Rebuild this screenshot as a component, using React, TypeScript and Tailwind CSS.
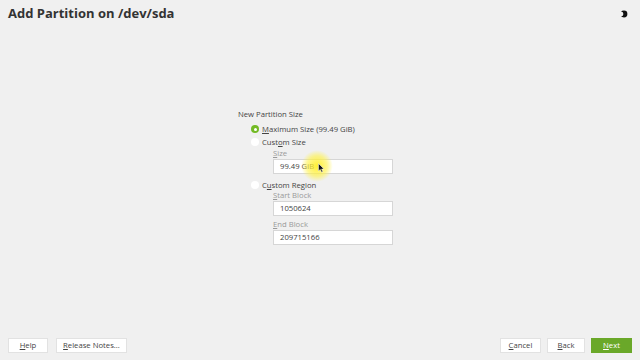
import React from 'react';

const font = { fontFamily: '"Open Sans", "Noto Sans", sans-serif' };

function Radio({ checked }: { checked?: boolean }) {
  return checked ? (
    <span className="flex h-[8px] w-[8px] items-center justify-center rounded-full bg-[#73ba25]">
      <span className="h-[3px] w-[3px] rounded-full bg-white" />
    </span>
  ) : (
    <span className="h-[8px] w-[8px] rounded-full bg-white" />
  );
}

function Field({ label, mnemonic, value }: { label: string; mnemonic: number; value: string }) {
  return (
    <div className="flex flex-col">
      <span className="text-[7.7px] leading-[10px] text-[#9a9a9a]">
        {label.slice(0, mnemonic)}
        <span className="underline">{label[mnemonic]}</span>
        {label.slice(mnemonic + 1)}
      </span>
      <div className="mt-[1px] flex h-[15px] w-[120px] items-center border border-[#d6d6d6] bg-white px-[6px] text-[7.7px] text-[#444]">
        {value}
      </div>
    </div>
  );
}

function Btn({ label, mnemonic, primary, w }: { label: string; mnemonic: number; primary?: boolean; w: string }) {
  return (
    <button
      className={`flex h-[15px] items-center justify-center text-[7.7px] ${w} ${
        primary ? 'bg-[#6aa829] text-white' : 'border border-[#e2e2e2] bg-white text-[#444]'
      }`}
    >
      {label.slice(0, mnemonic)}
      <span className="underline">{label[mnemonic]}</span>
      {label.slice(mnemonic + 1)}
    </button>
  );
}

export default function App() {
  return (
    <div className="relative flex h-[360px] w-[640px] flex-col overflow-hidden bg-[#f0f0f0]" style={font}>
      {/* Header */}
      <div className="flex h-[28px] items-center justify-between pl-[8px] pr-[12px]">
        <h1 className="text-[13px] font-bold text-[#333]">Add Partition on /dev/sda</h1>
        <svg width="7" height="8" viewBox="0 0 7 8">
          <circle cx="3" cy="4" r="3.4" fill="#111" />
          <circle cx="0.2" cy="4" r="2.2" fill="#f0f0f0" />
        </svg>
      </div>

      {/* Form */}
      <div className="flex flex-1 justify-center pt-[81px]">
        <div className="flex w-[164px] flex-col text-[7.7px] text-[#444]">
          <span className="leading-[10px]">New Partition Size</span>
          <div className="mt-[5px] flex h-[10px] items-center gap-[3px] pl-[13px]">
            <Radio checked />
            <span className="leading-[10px]">
              <span className="underline">M</span>aximum Size (99.49 GiB)
            </span>
          </div>
          <div className="mt-[3px] flex h-[10px] items-center gap-[3px] pl-[13px]">
            <Radio />
            <span className="leading-[10px]">
              Cust<span className="underline">o</span>m Size
            </span>
          </div>
          <div className="mt-[1px] pl-[35px]">
            <Field label="Size" mnemonic={0} value="99.49 GiB" />
          </div>
          <div className="mt-[6px] flex h-[10px] items-center gap-[3px] pl-[13px]">
            <Radio />
            <span className="leading-[10px]">
              C<span className="underline">u</span>stom Region
            </span>
          </div>
          <div className="flex flex-col gap-[3px] pl-[35px]">
            <Field label="Start Block" mnemonic={0} value="1050624" />
            <Field label="End Block" mnemonic={0} value="209715166" />
          </div>
        </div>
      </div>

      {/* Footer */}
      <div className="flex h-[24px] items-start justify-between px-[8px] pt-[2px]">
        <div className="flex gap-[8px]">
          <Btn label="Help" mnemonic={0} w="w-[40px]" />
          <Btn label="Release Notes..." mnemonic={0} w="w-[71px]" />
        </div>
        <div className="flex gap-[6px]">
          <Btn label="Cancel" mnemonic={0} w="w-[41px]" />
          <Btn label="Back" mnemonic={0} w="w-[38px]" />
          <Btn label="Next" mnemonic={0} primary w="w-[41px]" />
        </div>
      </div>

      {/* Cursor highlight */}
      <div className="pointer-events-none absolute left-[301px] top-[150px] h-[32px] w-[32px] rounded-full bg-[radial-gradient(circle,rgba(255,238,30,0.9)_0%,rgba(255,242,70,0.6)_45%,rgba(255,250,150,0)_70%)]" />
      <svg className="pointer-events-none absolute left-[318px] top-[163px]" width="7" height="10" viewBox="0 0 7 10">
        <path d="M0.5 0.5 L0.5 8 L2.3 6.4 L3.6 9.3 L4.8 8.8 L3.6 6 L6 6 Z" fill="#111" stroke="#fff" strokeWidth="0.5" />
      </svg>
    </div>
  );
}
